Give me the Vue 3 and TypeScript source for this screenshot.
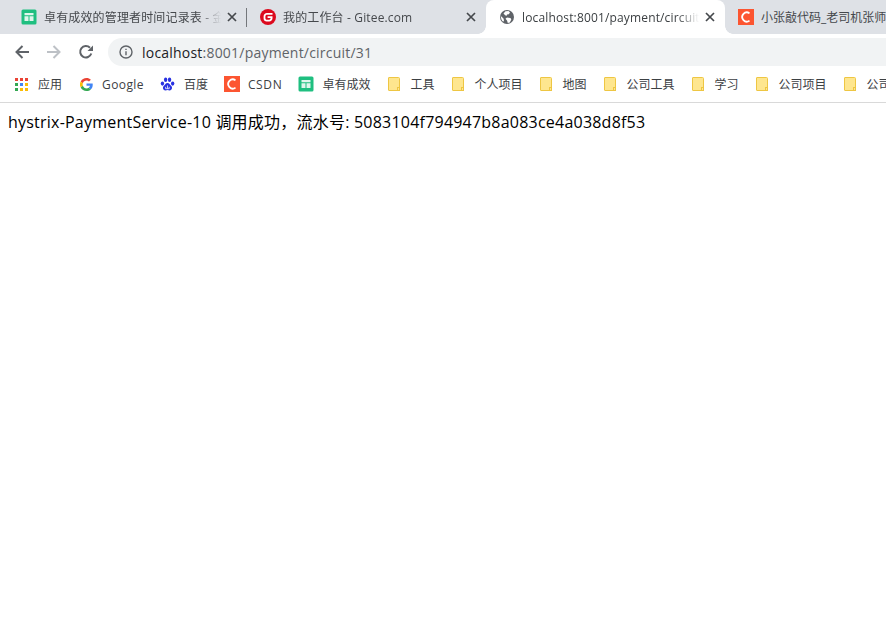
<script setup lang="ts">
type Bm = { label: string; icon: string }
const bookmarks: Bm[] = [
  { label: '应用', icon: 'apps' },
  { label: 'Google', icon: 'google' },
  { label: '百度', icon: 'baidu' },
  { label: 'CSDN', icon: 'csdn' },
  { label: '卓有成效', icon: 'sheet' },
  { label: '工具', icon: 'folder' },
  { label: '个人项目', icon: 'folder' },
  { label: '地图', icon: 'folder' },
  { label: '公司工具', icon: 'folder' },
  { label: '学习', icon: 'folder' },
  { label: '公司项目', icon: 'folder' },
  { label: '公司', icon: 'folder' },
]
type Tab = { title: string; icon: string; active?: boolean; last?: boolean; sep?: boolean }
const tabs: Tab[] = [
  { title: '卓有成效的管理者时间记录表 - 金山文档', icon: 'sheet', sep: true },
  { title: '我的工作台 - Gitee.com', icon: 'gitee' },
  { title: 'localhost:8001/payment/circuit/31', icon: 'globe', active: true },
  { title: '小张敲代码_老司机张师', icon: 'csdn', last: true },
]
const appColors = ['#ea4335', '#ea4335', '#ea4335', '#34a853', '#4285f4', '#fbbc05', '#34a853', '#fbbc05', '#fbbc05']
const isLatin = (s: string) => /^[A-Za-z]+$/.test(s)
</script>

<template>
  <div class="browser">
    <div class="tabstrip">
      <div
        v-for="t in tabs"
        :key="t.title"
        class="tab"
        :class="{ active: t.active, sep: t.sep, last: t.last }"
      >
        <svg v-if="t.icon === 'sheet'" class="fav" viewBox="0 0 16 16">
          <rect x="0.5" y="0.5" width="15" height="15" rx="1.5" fill="#1fbf80" />
          <path d="M3.500 4h9v2.200h-9zM3.500 7.200h4v4.800h-4zM8.500 7.200h4v4.800h-4z" fill="#dff6ec" />
        </svg>
        <svg v-else-if="t.icon === 'gitee'" class="fav" viewBox="0 0 16 16">
          <circle cx="8" cy="8" r="8" fill="#dc0a1e" />
          <path d="M12.500 7.200H7.600v1.700h3c0 1-.9 1.800-2 1.800H6.900c-.9 0-1.500-.7-1.500-1.500V7.300c0-.9.700-1.600 1.600-1.600h5.500V4H7C5.100 4 3.600 5.500 3.600 7.400v2c0 1.700 1.400 3 3 3h2.600c1.800 0 3.300-1.400 3.300-3.200z" fill="#fff" />
        </svg>
        <svg v-else-if="t.icon === 'globe'" class="fav" viewBox="0 0 16 16">
          <circle cx="8" cy="8" r="7" fill="#5f6368" />
          <path d="M6.500 2.200 9.500 2l1.500 1.500-1.200 1.700-1.800.3-.6 1.500L5.900 6 4.500 4.500zM8 8.500l3.500.5.800 1.500-1.500 3-2 .5-.8-2.500L6.500 9.800zM1.800 7l2.700 2.500.5 2-.8 1.200C2.800 11.700 1.800 9.500 1.800 7z" fill="#fff" />
        </svg>
        <svg v-else class="fav" viewBox="0 0 16 16">
          <rect width="16" height="16" fill="#fc5531" />
          <path d="M11.500 4.400A4.500 4.500 0 1 0 11.500 11.600" fill="none" stroke="#fff" stroke-width="1.800" />
        </svg>
        <span class="tab-title">{{ t.title }}</span>
        <svg v-if="!t.last" class="close" viewBox="0 0 10 10">
          <path d="M1 1l8 8M9 1l-8 8" stroke="#45484c" stroke-width="1.700" fill="none" />
        </svg>
      </div>
    </div>

    <div class="toolbar">
      <svg class="nav" viewBox="0 0 16 16">
        <path d="M15 8H2.500M8.500 2 2.500 8l6 6" fill="none" stroke="#5f6368" stroke-width="2" />
      </svg>
      <svg class="nav" viewBox="0 0 16 16">
        <path d="M1 8h12.500M7.500 2l6 6-6 6" fill="none" stroke="#bdc1c6" stroke-width="2" />
      </svg>
      <svg class="nav" viewBox="0 0 16 16">
        <path d="M13.300 9.500A5.700 5.700 0 1 1 12 3.800" fill="none" stroke="#5f6368" stroke-width="2" />
        <path d="M9.500 7H15V1.500z" fill="#5f6368" />
      </svg>
      <div class="omnibox">
        <svg class="info" viewBox="0 0 14 14">
          <circle cx="7" cy="7" r="6" fill="none" stroke="#5f6368" stroke-width="1.400" />
          <path d="M6.300 6.200h1.400v4H6.300zM6.300 3.700h1.400v1.400H6.300z" fill="#5f6368" />
        </svg>
        <span class="url"><span class="host">localhost</span>:8001/payment/circuit/31</span>
      </div>
    </div>

    <div class="bookmarks">
      <div v-for="b in bookmarks" :key="b.label + b.icon" class="bm">
        <span class="slot">
          <span v-if="b.icon === 'apps'" class="apps">
            <i v-for="(c, i) in appColors" :key="i" :style="{ background: c }"></i>
          </span>
          <svg v-else-if="b.icon === 'google'" class="g" viewBox="0 0 48 48">
            <path fill="#ea4335" d="M24 9.500c3.500 0 6.700 1.200 9.200 3.600l6.900-6.900C35.900 2.400 30.500 0 24 0 14.600 0 6.500 5.400 2.600 13.200l8 6.200C12.500 13.700 17.800 9.500 24 9.500z" />
            <path fill="#4285f4" d="M47 24.500c0-1.600-.1-3.100-.4-4.500H24v9h13c-.6 3-2.200 5.500-4.800 7.200l7.700 6C44.400 38 47 31.900 47 24.500z" />
            <path fill="#fbbc05" d="M10.500 28.600a14.500 14.500 0 0 1 0-9.200l-8-6.200a24 24 0 0 0 0 21.600z" />
            <path fill="#34a853" d="M24 48c6.500 0 11.900-2.100 15.900-5.800l-7.700-6c-2.200 1.500-4.900 2.300-8.200 2.300-6.200 0-11.500-4.200-13.400-9.900l-8 6.200C6.500 42.600 14.600 48 24 48z" />
          </svg>
          <svg v-else-if="b.icon === 'baidu'" class="paw" viewBox="0 0 16 16">
            <g fill="#2932e1">
              <ellipse cx="2.600" cy="7" rx="1.800" ry="2.300" />
              <ellipse cx="6" cy="3" rx="1.800" ry="2.400" />
              <ellipse cx="10.200" cy="3" rx="1.800" ry="2.400" />
              <ellipse cx="13.500" cy="7" rx="1.800" ry="2.300" />
              <path d="M8 6.500c2 0 2.500 2 4 3.200 1.500 1.300 1 4.600-1.700 4.600-1 0-1.500-.4-2.300-.4s-1.300.4-2.300.4C3 14.300 2.500 11 4 9.700c1.500-1.200 2-3.200 4-3.200z" />
            </g>
            <path d="M6 10.500v2h3.800v-2M8 9v3.500" fill="none" stroke="#fff" stroke-width=".8" />
          </svg>
          <svg v-else-if="b.icon === 'csdn'" class="full" viewBox="0 0 16 16">
            <rect width="16" height="16" fill="#fc5531" />
            <path d="M11.500 4.400A4.500 4.500 0 1 0 11.500 11.600" fill="none" stroke="#fff" stroke-width="1.800" />
          </svg>
          <svg v-else-if="b.icon === 'sheet'" class="full" viewBox="0 0 16 16">
            <rect x="0.500" y="0.500" width="15" height="15" rx="1.500" fill="#1fbf80" />
            <path d="M3.500 4h9v2.200h-9zM3.500 7.200h4v4.800h-4zM8.500 7.200h4v4.800h-4z" fill="#dff6ec" />
          </svg>
          <svg v-else class="folder" viewBox="0 0 12 14">
            <path d="M1 .5h9.500a1 1 0 0 1 1 1v12H1a.5.500 0 0 1-.5-.5V1a.5.500 0 0 1 .5-.5z" fill="#fee68f" stroke="#eec643" />
            <rect x="9.500" y="10.500" width="2" height="3" fill="#fee68f" stroke="#eec643" />
          </svg>
        </span>
        <span class="bm-label" :class="{ latin: isLatin(b.label), wide: b.label === 'CSDN' }">{{ b.label }}</span>
      </div>
    </div>

    <main class="content">hystrix-PaymentService-10 调用成功，流水号: 5083104f794947b8a083ce4a038d8f53</main>
  </div>
</template>

<style>
html, body { margin: 0; background: #fff; overflow: hidden; }
</style>

<style scoped>
.browser {
  width: 886px;
  height: 640px;
  overflow: hidden;
  background: #fff;
  font-family: "Open Sans", "Noto Sans CJK SC", sans-serif;
  color: #000;
}
.tabstrip {
  display: flex;
  height: 34px;
  padding-left: 8px;
  background: #dee1e6;
}
.tab {
  position: relative;
  box-sizing: border-box;
  flex: 0 0 239px;
  min-width: 0;
  height: 34px;
  display: flex;
  align-items: center;
  padding: 0 10px 0 13px;
  color: #45484c;
  font-size: 12px;
  letter-spacing: 0.15px;
}
.tab.active {
  background: #fff;
  border-radius: 8px 8px 0 0;
  color: #3c4043;
}
.tab.active::before,
.tab.active::after {
  content: "";
  position: absolute;
  bottom: 0;
  width: 8px;
  height: 8px;
}
.tab.active::before {
  left: -8px;
  background: radial-gradient(circle at 0 0, #dee1e6 7.5px, #fff 8px);
}
.tab.active::after {
  right: -8px;
  background: radial-gradient(circle at 100% 0, #dee1e6 7.5px, #fff 8px);
}
.tab.sep::after {
  content: "";
  position: absolute;
  right: 0;
  top: 8px;
  width: 1px;
  height: 19px;
  background: #74777b;
}
.tab.last { flex: 1 1 0; padding-right: 0; letter-spacing: 0; }
.fav { width: 16px; height: 16px; flex: none; }
.tab-title {
  flex: 1;
  min-width: 0;
  margin-left: 7px;
  white-space: nowrap;
  overflow: hidden;
  -webkit-mask-image: linear-gradient(to right, #000 calc(100% - 22px), transparent);
  mask-image: linear-gradient(to right, #000 calc(100% - 22px), transparent);
}
.tab.last .tab-title { -webkit-mask-image: none; mask-image: none; }
.close { width: 10px; height: 10px; flex: none; margin-left: 6px; }
.toolbar {
  box-sizing: border-box;
  height: 32px;
  display: flex;
  align-items: center;
  gap: 16px;
  padding: 4px 0 0 14px;
  background: #fff;
}
.nav { width: 16px; height: 16px; flex: none; }
.omnibox {
  flex: 1;
  height: 28px;
  margin-left: -2px;
  display: flex;
  align-items: center;
  padding-left: 11px;
  border-radius: 14px 0 0 14px;
  background: #f1f3f4;
}
.info { width: 14px; height: 14px; flex: none; margin-right: 9px; }
.url { font-size: 14px; letter-spacing: 0.21px; color: #5f6368; white-space: nowrap; }
.host { color: #202124; }
.bookmarks {
  box-sizing: border-box;
  height: 37px;
  display: flex;
  align-items: center;
  gap: 16px;
  padding-left: 14px;
  background: #fff;
  border-bottom: 1px solid #d9d9d9;
  overflow: hidden;
  white-space: nowrap;
}
.bm { display: flex; align-items: center; gap: 8px; flex: none; font-size: 12px; color: #3c4043; }
.latin { letter-spacing: 0.4px; }
.latin.wide { letter-spacing: 0.65px; }
.slot { width: 16px; height: 16px; display: flex; align-items: center; justify-content: center; flex: none; }
.apps { display: grid; grid-template-columns: repeat(3, 3px); gap: 2px; margin-left: -1px; }
.apps i { display: block; width: 3px; height: 3px; }
.g { width: 13px; height: 13px; }
.paw { width: 15px; height: 15px; }
.full { width: 16px; height: 16px; }
.folder { width: 12px; height: 14px; }
.content {
  padding: 8px;
  font-size: 16px;
  line-height: 22px;
  letter-spacing: 0.22px;
}
</style>
